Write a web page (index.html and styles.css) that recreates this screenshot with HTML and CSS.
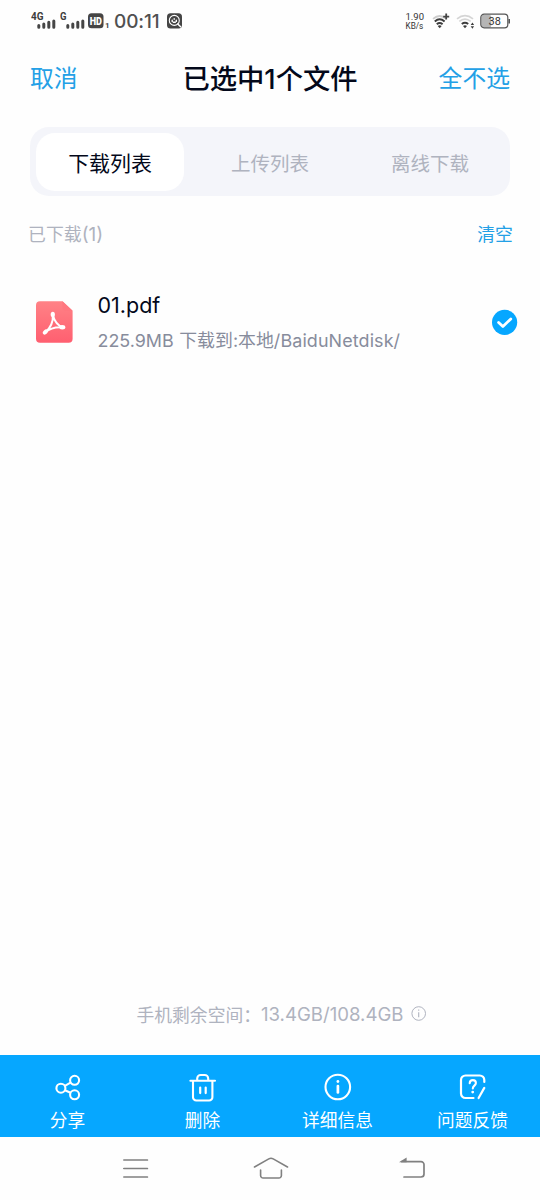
FILE: index.html
```html
<!DOCTYPE html>
<html lang="zh-CN">
<head>
<meta charset="utf-8">
<title>已选中1个文件</title>
<link rel="stylesheet" href="styles.css">
</head>
<body>
<div class="screen">
  <div class="status">
    <svg class="signal" width="26" height="20" viewBox="0 0 26 20">
      <text class="net" x="0" y="9" textLength="12.5" lengthAdjust="spacingAndGlyphs">4G</text>
      <path class="bars" d="M7.8 14.5v1.8M12.8 13v3.3M17.8 11.2v5.1M22.8 10v6.3"/>
    </svg>
    <svg class="signal-two" width="25" height="20" viewBox="0 0 25 20">
      <text class="net" x="0" y="9" textLength="6.5" lengthAdjust="spacingAndGlyphs">G</text>
      <path class="bars" d="M7.8 14.5v1.8M12.8 13v3.3M17.8 11.2v5.1M22.8 10v6.3"/>
    </svg>
    <svg class="hd" width="22" height="20" viewBox="0 0 22 20">
      <rect x="0" y="2.3" width="15.5" height="15" rx="3.5" fill="#454545"/>
      <text class="hd-text" x="1.7" y="13.8" textLength="12.2" lengthAdjust="spacingAndGlyphs">HD</text>
      <text class="sim" x="17" y="17.3">1</text>
    </svg>
    <span class="clock">00:11</span>
    <svg class="app" width="16" height="20" viewBox="0 0 16 20">
      <rect x="0" y="2.3" width="15" height="15.2" rx="3.5" fill="#454545"/>
      <circle cx="7.3" cy="9.4" r="5" fill="none" stroke="#fff" stroke-width="1.1"/>
      <path d="M10.8 13l2.8 2.8" stroke="#fff" stroke-width="1.5" stroke-linecap="round"/>
      <path d="M5.2 9.2v1.2M7.2 7.8v.4M9.3 9.2v1.2M6.3 11.3h2" stroke="#fff" stroke-width="1.4" stroke-linecap="round"/>
    </svg>
    <div class="speed"><span>1.90</span><span class="unit">KB/s</span></div>
    <svg class="wifi" width="18" height="20" viewBox="0 0 18 20">
      <path d="M1 7.8Q7.6 2.2 14.3 7.8" fill="none" stroke="#ccc" stroke-width="1.7"/>
      <path d="M2.8 10.4Q7.6 6.2 12.6 10.4M4.8 13.2Q7.6 10.8 10.6 13.2" fill="none" stroke="#3c3c3c" stroke-width="2"/>
      <path d="M5.7 15L7.7 17.2L9.7 15Q7.7 13.6 5.7 15Z" fill="#3c3c3c"/>
      <path d="M14.2 2.6v6M11.2 5.6h6" stroke="#444" stroke-width="1.8"/>
    </svg>
    <svg class="wifi-two" width="19" height="20" viewBox="0 0 19 20">
      <path d="M1 7.8Q9 1.5 17 7.8M3.3 10.4Q9 5.8 14.7 10.4" fill="none" stroke="#d5d5d5" stroke-width="1.7"/>
      <path d="M5.8 13Q9 10.5 12.2 13" fill="none" stroke="#3c3c3c" stroke-width="2"/>
      <path d="M7 15L9 17.2L11 15Q9 13.6 7 15ZM14.7 14l1.7-2.4 1.7 2.4zM14.7 15.3l1.7 2.4 1.7-2.4z" fill="#3c3c3c"/>
    </svg>
    <svg class="battery" width="31" height="20" viewBox="0 0 31 20">
      <rect x="1.3" y="4" width="10" height="12.5" rx="2" fill="#b5b5b5"/>
      <rect x=".8" y="3.1" width="27" height="13.8" rx="3.3" fill="none" stroke="#555" stroke-width="1.2"/>
      <path d="M29.2 8v4.5" stroke="#555" stroke-width="1.6"/>
      <text class="charge" x="8.5" y="14" textLength="12.3" lengthAdjust="spacingAndGlyphs">38</text>
    </svg>
  </div>

  <header class="header">
    <span class="link">取消</span>
    <h1 class="title">已选中1个文件</h1>
    <span class="link right">全不选</span>
  </header>

  <nav class="tabs">
    <span class="tab active">下载列表</span>
    <span class="tab">上传列表</span>
    <span class="tab">离线下载</span>
  </nav>

  <div class="section">
    <span>已下载<span class="count">(1)</span></span>
    <span class="clear">清空</span>
  </div>

  <div class="file">
    <svg class="pdf" width="37" height="42" viewBox="0 0 37 42">
      <defs><linearGradient id="red" x1="0" y1="0" x2="0" y2="1"><stop offset="0" stop-color="#ff8286"/><stop offset="1" stop-color="#ff5f70"/></linearGradient></defs>
      <path d="M4 .3H26.5L36.6 9.8V37.7a4 4 0 0 1-4 4H4a4 4 0 0 1-4-4V4.3a4 4 0 0 1 4-4Z" fill="url(#red)"/>
      <path d="M26.5.3L36.6 9.8H29.5a3 3 0 0 1-3-3Z" fill="#ff777f"/>
      <path d="M16.8 14C18.4 20 21 24.3 26.7 26.3M16.8 14C17.4 20.5 14.5 26.7 9.3 31.5M9.3 31.5C13.5 27.5 20 25.8 26.7 26.3" fill="none" stroke="#fff" stroke-width="2"/>
      <ellipse cx="16.8" cy="13.5" rx="2.1" ry="2.8" fill="#fff"/>
      <ellipse cx="26.3" cy="26.3" rx="3" ry="2.2" fill="#fff"/>
      <ellipse cx="9.4" cy="31" rx="2.9" ry="2.1" transform="rotate(-42 9.4 31)" fill="#fff"/>
    </svg>
    <div class="info">
      <span class="name">01.pdf</span>
      <span class="meta"><span class="size">225.9MB</span><span class="dest">下载到:本地</span><span class="path">/BaiduNetdisk/</span></span>
    </div>
    <svg class="check" width="26" height="26" viewBox="0 0 26 26">
      <circle cx="12.6" cy="13.3" r="12.6" fill="#06a7ff"/>
      <path d="M6.6 13.5l4.3 4 7.9-7.6" fill="none" stroke="#fff" stroke-width="2.8" stroke-linecap="round" stroke-linejoin="round"/>
    </svg>
  </div>

  <div class="storage">
    <span class="storage-label">手机剩余空间：</span><span class="storage-value">13.4GB/108.4GB</span>
    <svg width="16" height="16" viewBox="0 0 16 16"><circle cx="7.7" cy="7.5" r="6.8" fill="none" stroke="#afb3bf"/><path d="M7.7 6.2v5M7.7 3.5v1.3" stroke="#afb3bf" stroke-width="1.1"/></svg>
  </div>

  <div class="actions">
    <div class="action">
      <svg width="30" height="30" viewBox="0 0 30 30"><g fill="none" stroke="#fff" stroke-width="2.1"><circle cx="7.9" cy="15.2" r="4.5"/><circle cx="21.6" cy="7.3" r="4.5"/><circle cx="21.6" cy="21.8" r="4.5"/><path d="M11.9 12.9l5.6-3.2M11.9 17.3l5.6 2.5"/></g></svg>
      <span>分享</span>
    </div>
    <div class="action">
      <svg width="30" height="30" viewBox="0 0 30 30"><path d="M2.4 7.7h24.6M5 7.7v16.5a3.3 3.3 0 0 0 3.3 3.3h12.8a3.3 3.3 0 0 0 3.3-3.3V7.7M9.2 7.7V5.5A3.5 3.5 0 0 1 12.7 2h4a3.5 3.5 0 0 1 3.5 3.5v2.2" fill="none" stroke="#fff" stroke-width="2.1" stroke-linecap="round"/><path d="M12.2 14.5v5.6M17.7 14.5v5.6" stroke="#fff" stroke-width="2.2" stroke-linecap="round"/></svg>
      <span>删除</span>
    </div>
    <div class="action">
      <svg width="30" height="30" viewBox="0 0 30 30"><circle cx="14.8" cy="14" r="12.3" fill="none" stroke="#fff" stroke-width="2.1"/><circle cx="14.9" cy="8.5" r="1.4" fill="#fff"/><path d="M14.9 13v6.5" stroke="#fff" stroke-width="2.7" stroke-linecap="round"/></svg>
      <span>详细信息</span>
    </div>
    <div class="action">
      <svg width="30" height="30" viewBox="0 0 30 30"><path d="M26.3 9V7a4.5 4.5 0 0 0-4.5-4.5H7.5A4.5 4.5 0 0 0 3 7v13.5A4.5 4.5 0 0 0 7.5 25h8M20.6 25L26.3 14.9" fill="none" stroke="#fff" stroke-width="2.2" stroke-linecap="round"/><path d="M11.7 10.3c.2-4.3 6.2-4 6.2-.3 0 2.6-3.1 2.7-3.1 5.5" fill="none" stroke="#fff" stroke-width="2.1" stroke-linecap="round"/><circle cx="14.7" cy="19.1" r="1.4" fill="#fff"/></svg>
      <span>问题反馈</span>
    </div>
  </div>

  <div class="softkeys">
    <svg width="26" height="24" viewBox="0 0 26 24"><path d="M.8 3h23.6M.8 11.5h23.6M.8 20h23.6" stroke="#808080" stroke-width="1.7" stroke-linecap="round"/></svg>
    <svg class="home" width="36" height="24" viewBox="0 0 36 24"><path d="M1.5 10L15.8 1.9q2.2-1.2 4.4 0L34.5 10M7.6 13v5.5a2.5 2.5 0 0 0 2.5 2.5h15.8a2.5 2.5 0 0 0 2.5-2.5V13" fill="none" stroke="#808080" stroke-width="1.6" stroke-linecap="round"/></svg>
    <svg width="28" height="24" viewBox="0 0 28 24"><path d="M6 20h17a3 3 0 0 0 3-3V7.6a3 3 0 0 0-3-3H3.5" fill="none" stroke="#808080" stroke-width="1.7" stroke-linecap="round"/><path d="M1 5.3L8.6.6V5.3Z" fill="#808080"/></svg>
  </div>
</div>
</body>
</html>
```
FILE: styles.css
```css
* { box-sizing: border-box; }
body {
  margin: 0;
  background: #fefefe;
  font-family: Inter, "Noto Sans CJK SC", sans-serif;
  color: #03081a;
}
svg { display: block; flex: none; }
.screen {
  width: 540px;
  height: 1200px;
  display: flex;
  flex-direction: column;
  white-space: nowrap;
  overflow: hidden;
}

.status {
  height: 42px;
  padding: 11px 29px 0 31px;
  display: flex;
  align-items: flex-start;
}
.signal-two { margin-left: 3px; }
.hd { margin-left: 3px; }
.net { font: 700 10px Roboto, sans-serif; fill: #3c3c3c; }
.bars { stroke: #454545; stroke-width: 3; stroke-linecap: round; }
.hd-text { font: 900 10.5px Roboto, sans-serif; fill: #fff; }
.sim { font: 700 8px Roboto, sans-serif; fill: #454545; }
.clock {
  margin-left: 4px;
  width: 49px;
  font: 500 19px/21px Inter, sans-serif;
  letter-spacing: -0.1px;
  color: #505050;
}
.app { margin-left: 4px; }
.speed {
  margin-left: auto;
  width: 20px;
  display: flex;
  flex-direction: column;
  padding-top: 2px;
  font: 400 9.5px/8.5px Roboto, sans-serif;
  color: #333;
}
.unit { font-size: 8.2px; }
.wifi { margin-left: 6px; }
.wifi-two { margin-left: 6px; }
.battery { margin-left: 5px; margin-right: 0.5px; }
.charge { font: 400 11.5px Roboto, sans-serif; fill: #333; }

.header {
  height: 70px;
  padding: 0 30px;
  display: grid;
  grid-template-columns: 1fr auto 1fr;
  align-items: center;
}
.link { font-size: 23.8px; color: #23a0e6; padding-bottom: 2px; }
.right { text-align: right; }
.title { margin: 0; font-size: 27.3px; font-weight: 500; padding-bottom: 1px; }

.tabs {
  height: 69px;
  margin: 15px 30px 0;
  padding: 6px;
  border-radius: 19px;
  background: #f4f5fa;
  display: grid;
  grid-template-columns: 148px 1fr 148px;
}
.tab {
  display: flex;
  align-items: center;
  justify-content: center;
  font-size: 19.5px;
  color: #afb3bf;
}
.active {
  height: 58px;
  border-radius: 19px;
  background: #fff;
  font-size: 20.9px;
  color: #03081a;
}

.section {
  height: 75px;
  padding: 0 27px 2px 28px;
  display: flex;
  align-items: center;
  justify-content: space-between;
  font-size: 17.9px;
  color: #afb3bf;
}
.count { font-size: 19px; }
.clear { color: #23a0e6; }

.file {
  height: 102px;
  padding: 0 22px 0 36px;
  display: flex;
  align-items: center;
}
.info { margin-left: 24.5px; flex: 1; display: flex; flex-direction: column; }
.name { font-size: 21.5px; line-height: 34px; }
.meta {
  display: flex;
  align-items: baseline;
  padding-top: 2px;
  margin-bottom: -2px;
  font-size: 17.9px;
  line-height: 34px;
  color: #878c9c;
}
.dest { margin-left: 5.5px; }
.path { letter-spacing: 0.12px; }

.storage {
  height: 32px;
  margin-top: auto;
  padding-left: 136.5px;
  display: flex;
  align-items: center;
  font-size: 17.8px;
  color: #afb3bf;
}
.storage-value { font-size: 18.6px; }
.storage svg { margin-left: 7px; }

.actions {
  height: 82px;
  margin-top: 25px;
  padding-top: 18px;
  background: #06a7ff;
  display: grid;
  grid-template-columns: repeat(4, 1fr);
}
.action {
  display: flex;
  flex-direction: column;
  align-items: center;
  font-size: 17.7px;
  line-height: 36px;
  color: #fff;
}

.softkeys {
  height: 63px;
  padding: 20px 114px 0 123px;
  display: flex;
}
.home { margin: 0 auto 0 103.5px; }
```
